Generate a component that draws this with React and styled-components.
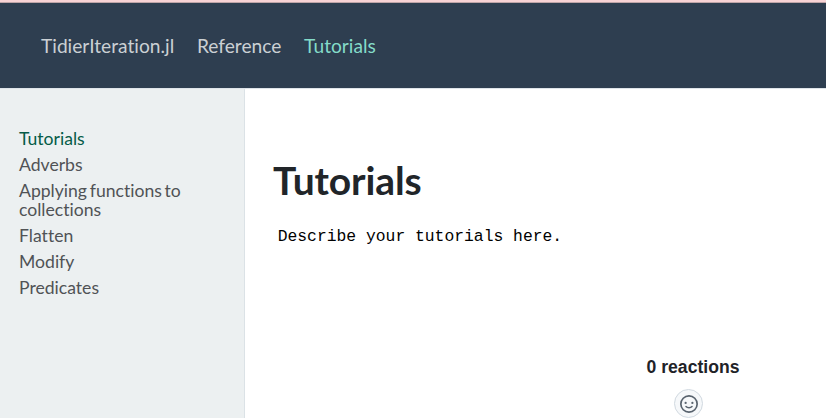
import React from "react";
import styled, { createGlobalStyle } from "styled-components";

const GlobalStyle = createGlobalStyle`
  * { box-sizing: border-box; }
  body {
    margin: 0;
    background: #fff;
    overflow: hidden;
    font-family: Lato, sans-serif;
    font-variant-ligatures: none;
  }
`;
const Page = styled.div`
  height: 418px;
  display: flex;
  flex-direction: column;
  overflow: hidden;
`;
const TopStrip = styled.div`
  flex: none;
  height: 3px;
  background: #f8d3d5;
  border-bottom: 1px solid #bfa5a8;
`;
const Navbar = styled.nav`
  flex: none;
  height: 86px;
  display: flex;
  align-items: center;
  gap: 22.7px;
  padding: 0 41px;
  background: #2e3e50;
  border-bottom: 1px solid #dee4e9;
`;
const NavLink = styled.a`
  font-size: 19.2px;
  line-height: 28px;
  white-space: nowrap;
  color: ${(p) => (p.$active ? "#84dbc9" : "#cbd0d4")};
`;
const Body = styled.div`
  flex: 1;
  display: flex;
  min-height: 0;
`;
const Sidebar = styled.aside`
  width: 245px;
  flex: none;
  padding: 40px 40px 0 19px;
  display: flex;
  flex-direction: column;
  gap: 7px;
  background: #ecf0f1;
  border-right: 1px solid #dbe2e6;
`;
const SideLink = styled.a`
  font-size: 17.6px;
  line-height: 19px;
  word-spacing: -1.8px;
  color: ${(p) => (p.$active ? "#045c48" : "#505356")};
`;
const Main = styled.main`
  flex: 1;
  padding: 66px 28px 0;
`;
const Title = styled.h1`
  margin: 0;
  font-size: 39px;
  line-height: 50px;
  font-weight: 700;
  letter-spacing: -0.12px;
  color: #212529;
`;
const Code = styled.pre`
  margin: 22px 0 0 4.7px;
  font: 16.35px/20px "Liberation Mono", monospace;
  color: #000;
`;
const Reactions = styled.section`
  width: 120px;
  margin: 109px 0 0 360px;
  display: flex;
  flex-direction: column;
  align-items: center;
  gap: 11px;
`;
const Count = styled.h4`
  margin: 0;
  font: 700 17.6px/22px "Liberation Sans", sans-serif;
  white-space: nowrap;
  color: #1f2328;
`;
const ReactButton = styled.button`
  width: 29px;
  height: 29px;
  margin-right: 9px;
  padding: 0;
  display: grid;
  place-items: center;
  border: 1px solid #d1d9e0;
  border-radius: 50%;
  background: #f6f8fa;
  color: #59636e;
`;

function Smiley() {
  return (
    <svg width="18" height="18" viewBox="0 0 16 16">
      <circle cx="8" cy="8" r="7.25" fill="none" stroke="currentColor" strokeWidth="1.5" />
      <circle cx="5" cy="7" r="1" fill="currentColor" />
      <circle cx="11" cy="7" r="1" fill="currentColor" />
      <path d="M5.32 10.3Q6.3 11.4 8 11.4T10.68 10.3" fill="none" stroke="currentColor" strokeWidth="1.3" strokeLinecap="round" />
    </svg>
  );
}

const nav = ["TidierIteration.jl", "Reference", "Tutorials"];
const pages = ["Tutorials", "Adverbs", "Applying functions to collections", "Flatten", "Modify", "Predicates"];

export default function App() {
  return (
    <Page>
      <GlobalStyle />
      <TopStrip />
      <Navbar>
        {nav.map((n) => <NavLink key={n} $active={n === "Tutorials"}>{n}</NavLink>)}
      </Navbar>
      <Body>
        <Sidebar>
          {pages.map((n) => <SideLink key={n} $active={n === "Tutorials"}>{n}</SideLink>)}
        </Sidebar>
        <Main>
          <Title>Tutorials</Title>
          <Code>Describe your tutorials here.</Code>
          <Reactions>
            <Count>0 reactions</Count>
            <ReactButton aria-label="Add reaction"><Smiley /></ReactButton>
          </Reactions>
        </Main>
      </Body>
    </Page>
  );
}
